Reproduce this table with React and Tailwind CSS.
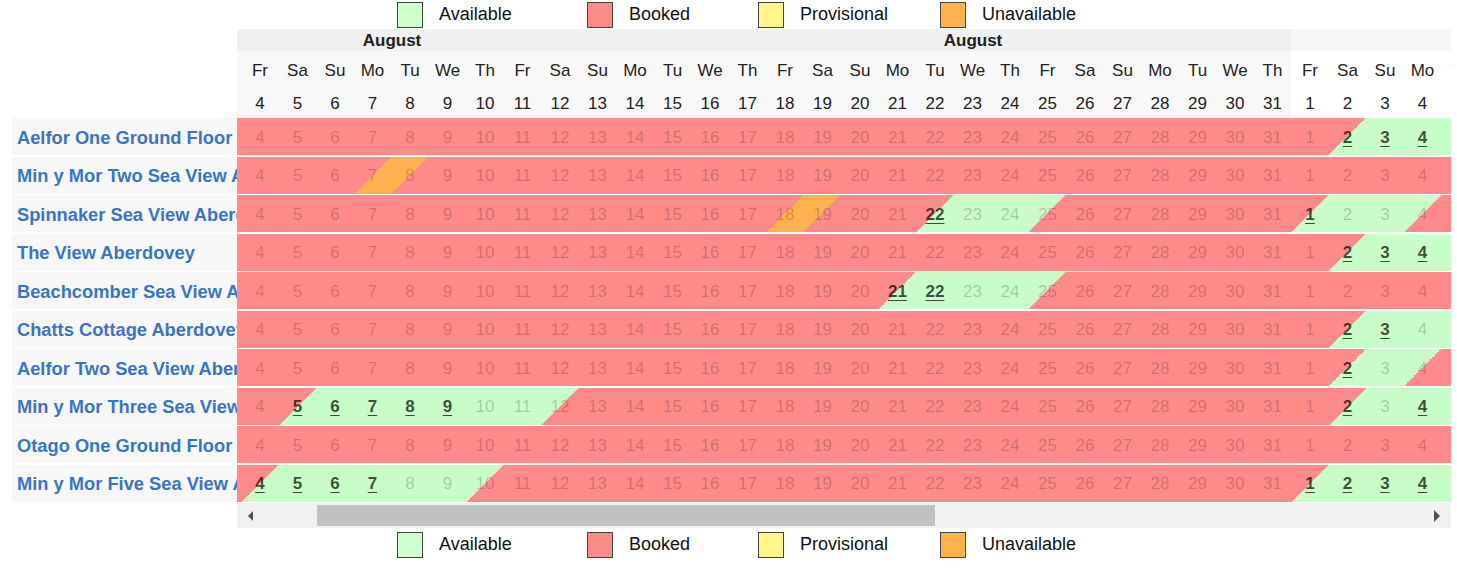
import React from "react";

// upper-left triangle = night before, lower-right = this night
const CELL_BG = {
  "b-b": "bg-[#ff8a8a]",
  "a-a": "bg-[#c8fcc8]",
  "u-u": "bg-[#ffb150]",
  "b-a": "bg-linear-to-br from-[#ff8a8a] from-50% to-[#c8fcc8] to-50%",
  "a-b": "bg-linear-to-br from-[#c8fcc8] from-50% to-[#ff8a8a] to-50%",
  "b-u": "bg-linear-to-br from-[#ff8a8a] from-50% to-[#ffb150] to-50%",
  "u-b": "bg-linear-to-br from-[#ffb150] from-50% to-[#ff8a8a] to-50%",
};

const WEEK = ["Fr", "Sa", "Su", "Mo", "Tu", "We", "Th"];

// Aug 3 (sliver) .. Aug 31, Sep 1 .. Sep 5
const days = [{ m: 8, d: 3, wd: "Th", sliver: true }];
for (let d = 4; d <= 31; d++) days.push({ m: 8, d, wd: WEEK[(d - 4) % 7] });
for (let d = 1; d <= 5; d++) days.push({ m: 9, d, wd: WEEK[(d - 1) % 7] });

const pos = (m, d) => (m === 8 ? d - 3 : 28 + d);

const range = (m, from, to) => {
  const out = [];
  for (let d = from; d <= to; d++) out.push([m, d]);
  return out;
};

function nights(a = [], u = []) {
  const n = Array(days.length + 1).fill("b");
  a.forEach(([m, d]) => (n[pos(m, d) + 1] = "a"));
  u.forEach(([m, d]) => (n[pos(m, d) + 1] = "u"));
  return n;
}

const keys = (list) => list.map(([m, d]) => `${m}-${d}`);

const properties = [
  {
    name: "Aelfor One Ground Floor Apartment",
    n: nights(range(9, 2, 5)),
    bold: keys(range(9, 2, 4)),
  },
  {
    name: "Min y Mor Two Sea View Apartment",
    n: nights([], [[8, 7]]),
    bold: [],
  },
  {
    name: "Spinnaker Sea View Aberdovey",
    n: nights([...range(8, 22, 24), ...range(9, 1, 3)], [[8, 18]]),
    bold: ["8-22", "9-1"],
  },
  {
    name: "The View Aberdovey",
    n: nights(range(9, 2, 5)),
    bold: keys(range(9, 2, 4)),
  },
  {
    name: "Beachcomber Sea View Apartment",
    n: nights(range(8, 21, 24)),
    bold: ["8-21", "8-22"],
  },
  {
    name: "Chatts Cottage Aberdovey",
    n: nights(range(9, 2, 5)),
    bold: ["9-2", "9-3"],
  },
  {
    name: "Aelfor Two Sea View Aberdovey",
    n: nights(range(9, 2, 3)),
    bold: ["9-2"],
  },
  {
    name: "Min y Mor Three Sea View Apartment",
    n: nights([...range(8, 5, 11), ...range(9, 2, 5)]),
    bold: [...keys(range(8, 5, 9)), "9-2", "9-4"],
  },
  {
    name: "Otago One Ground Floor Apartment",
    n: nights(),
    bold: [],
  },
  {
    name: "Min y Mor Five Sea View Apartment",
    n: nights([...range(8, 4, 9), ...range(9, 1, 5)]),
    bold: [...keys(range(8, 4, 7)), ...keys(range(9, 1, 4))],
  },
];

const legend = [
  { label: "Available", color: "bg-[#ccffcc]", w: "w-[190px]" },
  { label: "Booked", color: "bg-[#ff8a8a]", w: "w-[171px]" },
  { label: "Provisional", color: "bg-[#fff68a]", w: "w-[182px]" },
  { label: "Unavailable", color: "bg-[#ffb150]", w: "w-[150px]" },
];

const Legend = ({ className }) => (
  <div className={`flex pl-[397px] ${className}`}>
    {legend.map((item) => (
      <div key={item.label} className={`flex items-center ${item.w}`}>
        <span className={`h-[26px] w-[26px] border border-[#444] ${item.color}`} />
        <span className="ml-[16px] pb-[2px] text-[18px] leading-[24px] text-[#111]">{item.label}</span>
      </div>
    ))}
  </div>
);

const colWidth = (day) => (day.sliver ? "w-[4.25px]" : "w-[37.5px]");

export default function App() {
  return (
    <div className="w-[1457px] h-[572px] bg-white font-['Liberation_Sans',Arial,sans-serif] text-[17px]">
      {/* Top legend */}
      <Legend className="h-[29px] pt-[1px]" />

      <div className="flex">
        {/* Property names */}
        <div className="ml-[12px] w-[225px] shrink-0">
          <div className="h-[89px]" />
          {properties.map((p) => (
            <div key={p.name} className="h-[38.5px] pb-[1.5px]">
              <div className="flex h-full items-center overflow-hidden whitespace-nowrap bg-[#f7f7f7] pl-[5px] pt-[2px] text-[18.3px] font-bold text-[#3a75c4]">
                {p.name}
              </div>
            </div>
          ))}
        </div>

        {/* Calendar grid */}
        <div className="w-[1214px] shrink-0 overflow-hidden">
          {/* Month row */}
          <div className="flex h-[22px] text-[#222]">
            <div className="flex w-[1054.25px] shrink-0 items-center bg-[#f0f0f0] pt-[2px] font-bold">
              <span className="w-[310px] text-center">August</span>
              <span className="ml-[271px] w-[310px] text-center">August</span>
            </div>
            <div className="flex-1 bg-[#f7f7f7]" />
          </div>

          {/* Weekday row */}
          <div className="flex h-[36px] text-[#222]">
            {days.map((day) => (
              <div
                key={`w${day.m}-${day.d}`}
                className={`flex shrink-0 items-center justify-center overflow-hidden whitespace-nowrap pt-[3px] ${colWidth(day)} ${day.m === 8 ? "bg-[#f8f8f8]" : "bg-white"}`}
              >
                {day.sliver ? "" : day.wd}
              </div>
            ))}
          </div>

          {/* Day number row */}
          <div className="flex h-[31px] text-[#222]">
            {days.map((day) => (
              <div
                key={`d${day.m}-${day.d}`}
                className={`flex shrink-0 items-center justify-center overflow-hidden pt-[2px] ${colWidth(day)} ${day.m === 8 ? "bg-[#f8f8f8]" : "bg-white"}`}
              >
                {day.sliver ? "" : day.d}
              </div>
            ))}
          </div>

          {/* Availability rows */}
          {properties.map((p) => (
            <div key={p.name} className="flex h-[38.5px] pb-[1.5px]">
              {days.map((day, i) => {
                const bg = CELL_BG[`${p.n[i]}-${p.n[i + 1]}`];
                const isBold = p.bold.includes(`${day.m}-${day.d}`);
                return (
                  <div
                    key={`${day.m}-${day.d}`}
                    className={`flex h-full shrink-0 items-center justify-center overflow-hidden pt-[2px] ${colWidth(day)} ${bg}`}
                  >
                    {day.sliver ? null : isBold ? (
                      <span className="font-bold text-black/70 underline underline-offset-[3px]">{day.d}</span>
                    ) : (
                      <span className="text-black/20">{day.d}</span>
                    )}
                  </div>
                );
              })}
            </div>
          ))}

          {/* Horizontal scrollbar */}
          <div className="flex h-[25px] items-center bg-[#f1f1f1]">
            <div className="flex w-[17px] shrink-0 justify-end">
              <svg width="7" height="10" viewBox="0 0 7 10">
                <polygon points="6,0 6,10 1,5" fill="#505050" />
              </svg>
            </div>
            <div className="flex-1">
              <div className="ml-[63px] h-[21px] w-[618px] bg-[#c1c1c1]" />
            </div>
            <div className="flex w-[17px] shrink-0 justify-start">
              <svg width="7" height="12" viewBox="0 0 7 12">
                <polygon points="0,0 0,12 6,6" fill="#505050" />
              </svg>
            </div>
          </div>
        </div>
      </div>

      {/* Bottom legend */}
      <Legend className="pt-[4px]" />
    </div>
  );
}
